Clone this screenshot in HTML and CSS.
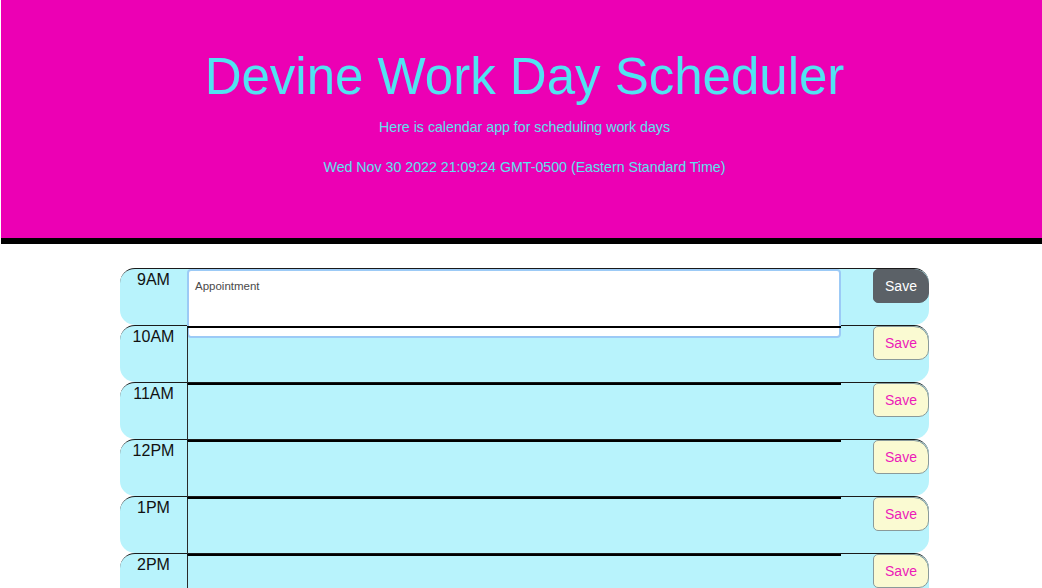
FILE: index.html
```html
<!DOCTYPE html>
<html lang="en">
<head>
<meta charset="utf-8">
<title>Devine Work Day Scheduler</title>
<link rel="stylesheet" href="styles.css">
</head>
<body>
<header class="jumbotron">
  <h1 class="title">Devine Work Day Scheduler</h1>
  <p class="lead">Here is calendar app for scheduling work days</p>
  <p class="lead date">Wed Nov 30 2022 21:09:24 GMT-0500 (Eastern Standard Time)</p>
</header>
<main class="container">
  <div class="row"><div class="hour">9AM</div><textarea class="description focused">Appointment</textarea><div class="btn-col"><button class="saveBtn active">Save</button></div></div>
  <div class="row"><div class="hour">10AM</div><textarea class="description"></textarea><div class="btn-col"><button class="saveBtn">Save</button></div></div>
  <div class="row"><div class="hour">11AM</div><textarea class="description"></textarea><div class="btn-col"><button class="saveBtn">Save</button></div></div>
  <div class="row"><div class="hour">12PM</div><textarea class="description"></textarea><div class="btn-col"><button class="saveBtn">Save</button></div></div>
  <div class="row"><div class="hour">1PM</div><textarea class="description"></textarea><div class="btn-col"><button class="saveBtn">Save</button></div></div>
  <div class="row"><div class="hour">2PM</div><textarea class="description"></textarea><div class="btn-col"><button class="saveBtn">Save</button></div></div>
  <div class="row"><div class="hour">3PM</div><textarea class="description"></textarea><div class="btn-col"><button class="saveBtn">Save</button></div></div>
  <div class="row"><div class="hour">4PM</div><textarea class="description"></textarea><div class="btn-col"><button class="saveBtn">Save</button></div></div>
  <div class="row"><div class="hour">5PM</div><textarea class="description"></textarea><div class="btn-col"><button class="saveBtn">Save</button></div></div>
</main>
</body>
</html>
```
FILE: styles.css
```css
* { box-sizing: border-box; }

body {
  margin: 0;
  font-family: "Liberation Sans", Arial, sans-serif;
  background: #ffffff;
}

.jumbotron {
  margin-left: 1px;
  background: #ec00b4;
  color: #52e3f1;
  text-align: center;
  padding: 46px 0 61px 6px;
  border-bottom: 6px solid #000000;
}

.title {
  margin: 0;
  font-size: 51px;
  font-weight: 400;
  line-height: 1.2;
}

.lead {
  margin: 10px 0 0;
  font-size: 14.2px;
  line-height: 20px;
  color: #5ee2ee;
}

.lead.date {
  margin-top: 20px;
}

.container {
  width: 809px;
  margin: 24px 0 0 120px;
}

.row {
  display: flex;
  align-items: flex-start;
  height: 57px;
  background: #b8f3fc;
  border-top: 1px solid #1a1a1a;
  border-radius: 15px;
}

.hour {
  width: 67px;
  flex: none;
  text-align: center;
  font-size: 16px;
  line-height: 22px;
  color: #111111;
}

.description {
  width: 654px;
  height: 69px;
  flex: none;
  margin: 0;
  padding: 9px 6px;
  background: transparent;
  border: none;
  border-left: 1px solid #2a2a2a;
  border-top: 2px solid #000000;
  resize: none;
  font-family: "Liberation Sans", Arial, sans-serif;
  font-size: 11.5px;
  color: #4a4a4a;
  outline: none;
}

.description.focused {
  background: #ffffff;
  border: 2px solid #9ccaf6;
  border-radius: 4px;
  padding-top: 9px;
}

.btn-col {
  flex: 1;
  display: flex;
  justify-content: flex-end;
}

.saveBtn {
  width: 56px;
  height: 34px;
  padding: 0 0 1px;
  font-family: "Liberation Sans", Arial, sans-serif;
  font-size: 14px;
  background: #fafad2;
  color: #ec1ab8;
  border: 1px solid #8a9a9a;
  border-radius: 5px 15px 10px 5px;
}

.saveBtn.active {
  background: #5b6167;
  color: #ffffff;
  border-color: #5b6167;
}
```
